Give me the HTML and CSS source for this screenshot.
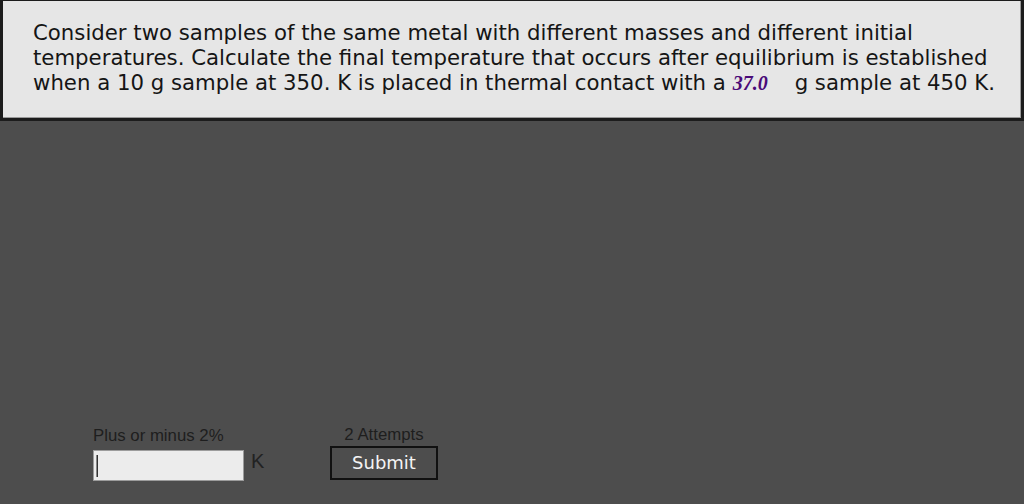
FILE: index.html
```html
<!DOCTYPE html>
<html>
<head>
<meta charset="utf-8">
<link rel="stylesheet" href="styles.css">
</head>
<body>
<div class="panel">
  <p class="question">Consider two samples of the same metal with different masses and different initial<br>temperatures. Calculate the final temperature that occurs after equilibrium is established<br>when a 10 g sample at 350. K is placed in thermal contact with a <span class="var">37.0</span><span class="gap"></span>g sample at 450 K.</p>
</div>
<div class="answer">
  <div class="field">
    <div class="hint">Plus or minus 2%</div>
    <div class="inputrow">
      <div class="input"><span class="caret"></span></div>
      <span class="unit">K</span>
    </div>
  </div>
  <div class="submitcol">
    <div class="attempts">2 Attempts</div>
    <div class="submit">Submit</div>
  </div>
</div>
</body>
</html>
```
FILE: styles.css
```css
html, body {
  margin: 0;
  padding: 0;
  background: #4d4d4d;
  width: 1024px;
  height: 504px;
  overflow: hidden;
}
.panel {
  box-sizing: border-box;
  height: 121px;
  background: #e6e6e6;
  border: 3px solid #1c1c1c;
  border-top-width: 1px;
  box-shadow: inset -1px -1px 0 #9a9a9a;
  padding: 19px 0 0 30px;
}
.question {
  margin: 0;
  font-family: "DejaVu Sans", Verdana, sans-serif;
  font-size: 21.25px;
  line-height: 25px;
  color: #151515;
  white-space: nowrap;
}
.var {
  font-family: "Liberation Serif", "Times New Roman", serif;
  font-weight: bold;
  font-style: italic;
  color: #4a0a78;
  font-size: 20px;
}
.gap {
  display: inline-block;
  width: 27px;
}
.answer {
  display: flex;
  padding: 305px 0 0 93px;
}
.field {
  display: flex;
  flex-direction: column;
  padding-top: 1px;
  width: 237px;
}
.hint {
  font-family: "Liberation Sans", Arial, sans-serif;
  font-size: 16.8px;
  line-height: 18px;
  color: #1e1e1e;
}
.inputrow {
  display: flex;
  align-items: flex-start;
  margin-top: 5px;
}
.input {
  box-sizing: border-box;
  width: 151px;
  height: 31px;
  background: #ececec;
  border: 1px solid #9c9c9c;
  padding: 4px 0 0 2px;
}
.caret {
  display: block;
  width: 1px;
  height: 22px;
  background: #333;
  border-left: 1px solid #888;
}
.unit {
  font-family: "Liberation Sans", Arial, sans-serif;
  font-size: 20px;
  line-height: 22px;
  color: #222;
  margin-left: 7px;
}
.submitcol {
  display: flex;
  flex-direction: column;
  align-items: center;
  width: 108px;
}
.attempts {
  font-family: "Liberation Sans", Arial, sans-serif;
  font-size: 16.8px;
  line-height: 18px;
  color: #1e1e1e;
}
.submit {
  box-sizing: border-box;
  margin-top: 2px;
  width: 108px;
  height: 34px;
  border: 2px solid #111;
  color: #f4f4f4;
  font-family: "DejaVu Sans", Verdana, sans-serif;
  font-size: 18px;
  line-height: 30px;
  text-align: center;
}
```
